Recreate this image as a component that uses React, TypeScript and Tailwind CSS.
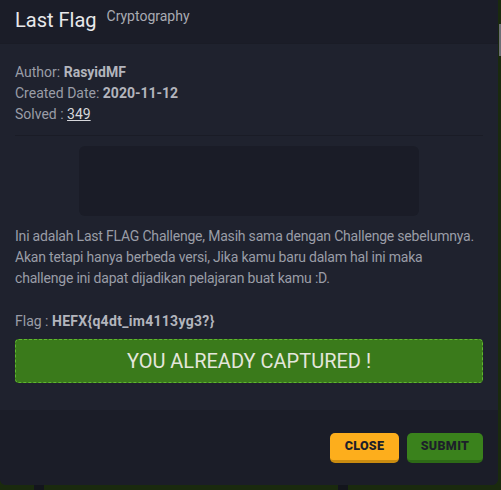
export default function App() {
  return (
    <div className="relative w-[501px] h-[490px] overflow-hidden bg-[#1a2a0e] font-['Roboto',sans-serif]">
      {/* backdrop bits */}
      <div className="absolute left-[34px] top-[485px] w-[10px] h-[5px] bg-[#13151c]" />
      <div className="absolute left-[338px] top-[485px] w-[10px] h-[5px] bg-[#13151c]" />
      <div className="absolute left-[499px] top-[24px] w-[2px] h-[32px] bg-[#6b6e74]" />

      <div className="w-[498px] h-[485px] rounded-b-[6px] overflow-hidden flex flex-col bg-[#1f222e]">
        <div className="h-[44px] shrink-0 bg-[#1b1d28] border-b border-[#1a1c26] flex items-start px-[15px] pt-[8px]">
          <h4 className="text-[20px] leading-[24px] text-[#e8e8ea]">Last Flag</h4>
          <span className="ml-[10px] mt-[-2px] text-[14px] text-[#a9abb3]">Cryptography</span>
        </div>

        <div className="flex-1 px-[15px] pt-[18px] text-[#9a9da7] text-[14px] leading-[21px]">
          <p>
            Author: <b className="font-bold text-[#b3b5bd]">RasyidMF</b>
          </p>
          <p>
            Created Date: <b className="font-bold text-[#b3b5bd]">2020-11-12</b>
          </p>
          <p>
            Solved : <span className="text-[#d6d7db] underline">349</span>
          </p>
          <div className="mt-[10px] border-t border-[#1a1c26]" />
          <div className="mx-auto mt-[10px] w-[340px] h-[70px] rounded-[6px] bg-[#1a1c27]" />
          <p className="mt-[10px] tracking-[-0.2px]">
            Ini adalah Last FLAG Challenge, Masih sama dengan Challenge sebelumnya. Akan tetapi hanya berbeda versi, Jika kamu baru dalam hal ini maka challenge ini dapat dijadikan pelajaran buat kamu :D.
          </p>
          <p className="mt-[22px]">
            Flag : <b className="font-bold text-[#b3b5bd] tracking-[0.3px]">HEFX{"{"}q4dt_im4113yg3?{"}"}</b>
          </p>
          <div className="mt-[7px] h-[44px] rounded-[4px] bg-[#3a7a1b] border border-dashed border-[#5fb82e] flex items-center justify-center text-[20px] text-[#e4e6dc]">
            YOU ALREADY CAPTURED !
          </div>
        </div>

        <div className="h-[75px] shrink-0 bg-[#1b1d28] flex justify-end items-start gap-[8px] px-[15px] pt-[23px]">
          <button className="w-[69px] h-[30px] rounded-[5px] bg-[#fdae1c] border-b-[3px] border-[#c98b10] text-[12.5px] font-black text-[#1d1f2a] tracking-wide">
            CLOSE
          </button>
          <button className="w-[76px] h-[30px] rounded-[5px] bg-[#3a821c] border-b-[3px] border-[#2d6a16] text-[12.5px] font-black text-[#1d1f2a] tracking-wide">
            SUBMIT
          </button>
        </div>
      </div>
    </div>
  );
}
